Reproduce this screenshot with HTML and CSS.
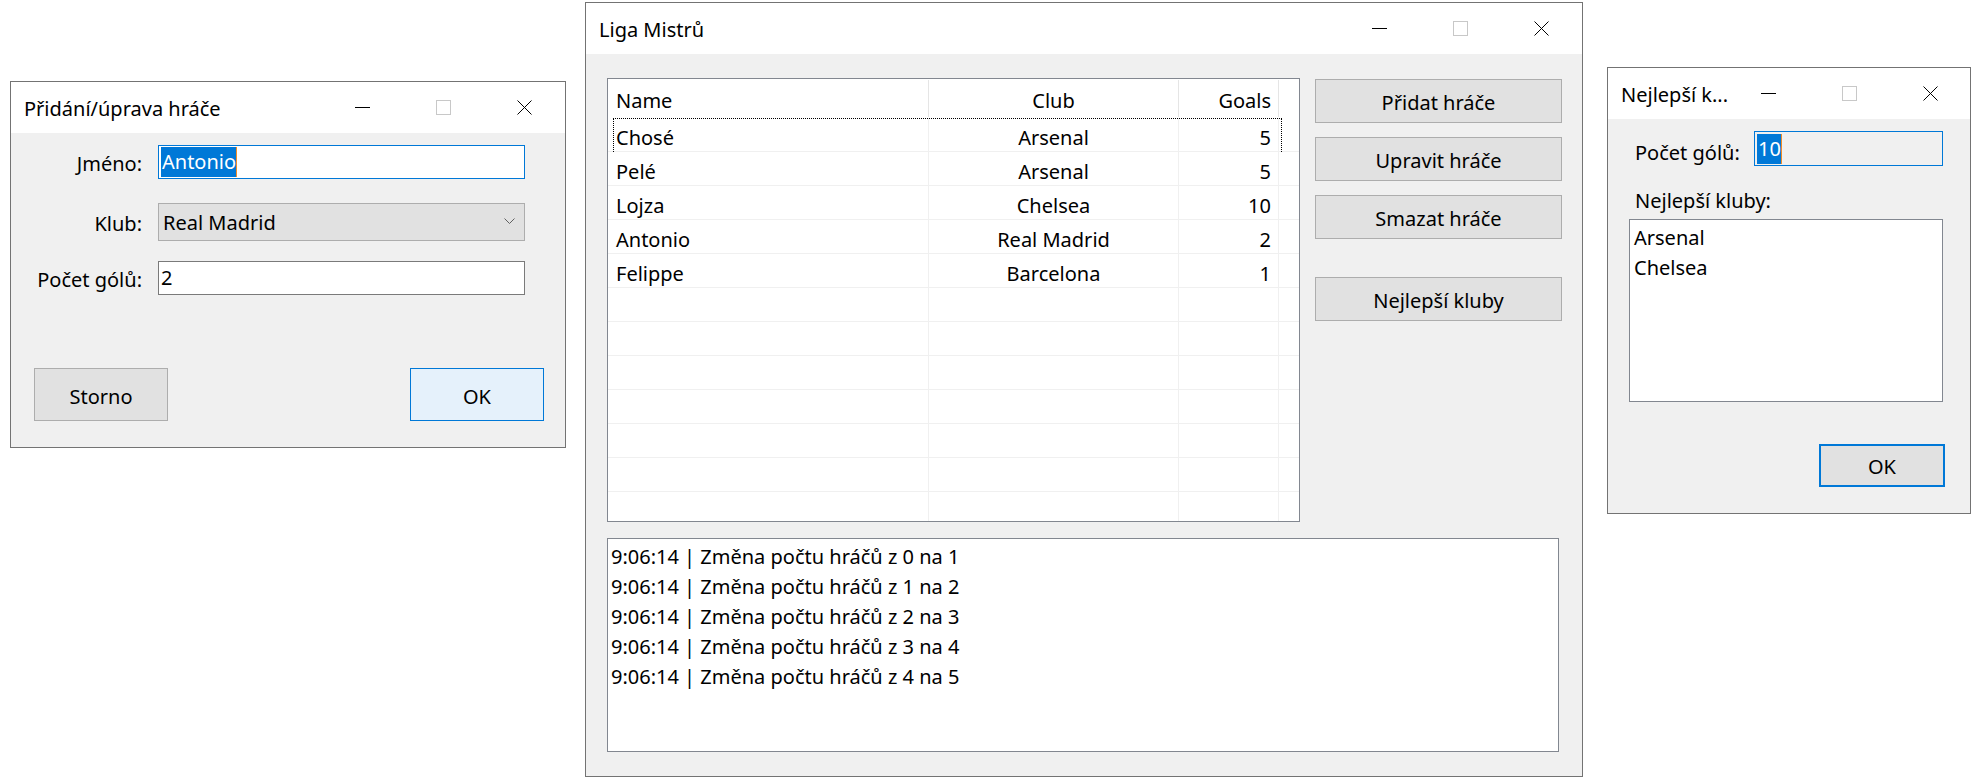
FILE: index.html
```html
<!DOCTYPE html>
<html lang="cs">
<head>
<meta charset="utf-8">
<title>Liga Mistrů</title>
<link rel="stylesheet" href="styles.css">
</head>
<body>
<div class="desktop">

  <section class="win win-edit">
    <header class="titlebar">
      <span class="title">Přidání/úprava hráče</span>
      <div class="controls">
        <span class="ctrl"><svg width="15" height="15" viewBox="0 0 15 15"><line x1="0" y1="7.5" x2="15" y2="7.5" stroke="#000" stroke-width="1"/></svg></span>
        <span class="ctrl"><svg width="15" height="15" viewBox="0 0 15 15"><rect x="0.5" y="0.5" width="14" height="14" fill="none" stroke="#c8c8c8" stroke-width="1"/></svg></span>
        <span class="ctrl"><svg width="15" height="15" viewBox="0 0 15 15"><path d="M0.5 0.5 L14.5 14.5 M14.5 0.5 L0.5 14.5" stroke="#000" stroke-width="1" fill="none"/></svg></span>
      </div>
    </header>
    <div class="winbody edit-body">
      <div class="form-row r1">
        <span class="label">Jméno:</span>
        <div class="textbox focused"><span class="sel">Antonio</span><span class="caret"></span></div>
      </div>
      <div class="form-row r2">
        <span class="label">Klub:</span>
        <div class="combo"><span>Real Madrid</span><svg class="chev" width="11" height="7" viewBox="0 0 11 7"><polyline points="0.5,0.5 5.5,5.5 10.5,0.5" fill="none" stroke="#606060" stroke-width="1"/></svg></div>
      </div>
      <div class="form-row r3">
        <span class="label">Počet gólů:</span>
        <div class="textbox">2</div>
      </div>
      <div class="actions">
        <button class="btn btn-cancel">Storno</button>
        <button class="btn btn-default-hover">OK</button>
      </div>
    </div>
  </section>

  <section class="win win-main">
    <header class="titlebar">
      <span class="title">Liga Mistrů</span>
      <div class="controls">
        <span class="ctrl"><svg width="15" height="15" viewBox="0 0 15 15"><line x1="0" y1="7.5" x2="15" y2="7.5" stroke="#000" stroke-width="1"/></svg></span>
        <span class="ctrl"><svg width="15" height="15" viewBox="0 0 15 15"><rect x="0.5" y="0.5" width="14" height="14" fill="none" stroke="#c8c8c8" stroke-width="1"/></svg></span>
        <span class="ctrl"><svg width="15" height="15" viewBox="0 0 15 15"><path d="M0.5 0.5 L14.5 14.5 M14.5 0.5 L0.5 14.5" stroke="#000" stroke-width="1" fill="none"/></svg></span>
      </div>
    </header>
    <div class="winbody main-body">
      <div class="listview">
        <div class="lv-header">
          <div class="hc c-name">Name</div>
          <div class="hc c-club">Club</div>
          <div class="hc c-goals">Goals</div>
          <div class="hc c-fill"></div>
        </div>
        <div class="lv-rows">
          <div class="lv-row focus"><div class="c c-name">Chosé</div><div class="c c-club">Arsenal</div><div class="c c-goals">5</div><div class="c c-fill"></div></div>
          <div class="lv-row"><div class="c c-name">Pelé</div><div class="c c-club">Arsenal</div><div class="c c-goals">5</div><div class="c c-fill"></div></div>
          <div class="lv-row"><div class="c c-name">Lojza</div><div class="c c-club">Chelsea</div><div class="c c-goals">10</div><div class="c c-fill"></div></div>
          <div class="lv-row"><div class="c c-name">Antonio</div><div class="c c-club">Real Madrid</div><div class="c c-goals">2</div><div class="c c-fill"></div></div>
          <div class="lv-row"><div class="c c-name">Felippe</div><div class="c c-club">Barcelona</div><div class="c c-goals">1</div><div class="c c-fill"></div></div>
          <div class="lv-row"><div class="c c-name"></div><div class="c c-club"></div><div class="c c-goals"></div><div class="c c-fill"></div></div>
          <div class="lv-row"><div class="c c-name"></div><div class="c c-club"></div><div class="c c-goals"></div><div class="c c-fill"></div></div>
          <div class="lv-row"><div class="c c-name"></div><div class="c c-club"></div><div class="c c-goals"></div><div class="c c-fill"></div></div>
          <div class="lv-row"><div class="c c-name"></div><div class="c c-club"></div><div class="c c-goals"></div><div class="c c-fill"></div></div>
          <div class="lv-row"><div class="c c-name"></div><div class="c c-club"></div><div class="c c-goals"></div><div class="c c-fill"></div></div>
          <div class="lv-row"><div class="c c-name"></div><div class="c c-club"></div><div class="c c-goals"></div><div class="c c-fill"></div></div>
          <div class="lv-row"><div class="c c-name"></div><div class="c c-club"></div><div class="c c-goals"></div><div class="c c-fill"></div></div>
        </div>
      </div>
      <div class="side-buttons">
        <button class="btn side-btn">Přidat hráče</button>
        <button class="btn side-btn">Upravit hráče</button>
        <button class="btn side-btn">Smazat hráče</button>
        <button class="btn side-btn gap-before">Nejlepší kluby</button>
      </div>
      <div class="log">
        <div>9:06:14 | Změna počtu hráčů z 0 na 1</div>
        <div>9:06:14 | Změna počtu hráčů z 1 na 2</div>
        <div>9:06:14 | Změna počtu hráčů z 2 na 3</div>
        <div>9:06:14 | Změna počtu hráčů z 3 na 4</div>
        <div>9:06:14 | Změna počtu hráčů z 4 na 5</div>
      </div>
    </div>
  </section>

  <section class="win win-best">
    <header class="titlebar">
      <span class="title">Nejlepší k...</span>
      <div class="controls">
        <span class="ctrl"><svg width="15" height="15" viewBox="0 0 15 15"><line x1="0" y1="7.5" x2="15" y2="7.5" stroke="#000" stroke-width="1"/></svg></span>
        <span class="ctrl"><svg width="15" height="15" viewBox="0 0 15 15"><rect x="0.5" y="0.5" width="14" height="14" fill="none" stroke="#c8c8c8" stroke-width="1"/></svg></span>
        <span class="ctrl"><svg width="15" height="15" viewBox="0 0 15 15"><path d="M0.5 0.5 L14.5 14.5 M14.5 0.5 L0.5 14.5" stroke="#000" stroke-width="1" fill="none"/></svg></span>
      </div>
    </header>
    <div class="winbody best-body">
      <div class="best-row">
        <span class="label-left">Počet gólů:</span>
        <div class="textbox readonly focused"><span class="sel">10</span><span class="caret"></span></div>
      </div>
      <div class="best-caption">Nejlepší kluby:</div>
      <div class="listbox">
        <div>Arsenal</div>
        <div>Chelsea</div>
      </div>
      <div class="best-actions">
        <button class="btn btn-default">OK</button>
      </div>
    </div>
  </section>

</div>
</body>
</html>
```

FILE: styles.css
```css
* { box-sizing: border-box; }

html, body {
  margin: 0;
  padding: 0;
  background: #ffffff;
}

body {
  font-family: "Noto Sans", "Open Sans", sans-serif;
  font-size: 20px;
  color: #000;
}

.desktop {
  position: relative;
  width: 1982px;
  height: 782px;
  overflow: hidden;
  background: #ffffff;
}

/* ---------- windows ---------- */
.win {
  position: absolute;
  display: flex;
  flex-direction: column;
  border: 1px solid #737373;
  background: #f0f0f0;
}

.win-edit { left: 10px; top: 81px; width: 556px; height: 367px; }
.win-main { left: 585px; top: 2px; width: 998px; height: 775px; }
.win-best { left: 1607px; top: 67px; width: 364px; height: 447px; }

.titlebar {
  height: 51px;
  flex: 0 0 51px;
  background: #ffffff;
  display: flex;
  align-items: center;
  justify-content: space-between;
}

.title {
  padding-left: 13px;
  padding-top: 2px;
  white-space: nowrap;
  line-height: 1;
}

.controls {
  display: flex;
  height: 100%;
}

.ctrl {
  width: 81px;
  height: 100%;
  display: flex;
  align-items: center;
  justify-content: center;
}

.ctrl svg { display: block; }

.winbody {
  flex: 1;
  background: #f0f0f0;
}

/* ---------- common controls ---------- */
.textbox {
  height: 34px;
  background: #ffffff;
  border: 1px solid #7a7a7a;
  padding: 0 2px;
  display: flex;
  align-items: center;
  line-height: 30px;
  white-space: nowrap;
}

.textbox.focused { border-color: #0078d7; }

.textbox .sel {
  background: #0078d7;
  color: #ffffff;
  height: 30px;
  line-height: 30px;
  padding-left: 1px;
}

.textbox .caret {
  width: 1px;
  height: 30px;
  background: #f08c28;
}

.btn {
  font-family: inherit;
  font-size: 20px;
  color: #000;
  background: #e1e1e1;
  border: 1px solid #adadad;
  padding: 2px 0 0;
  margin: 0;
  display: flex;
  align-items: center;
  justify-content: center;
}

.btn-default-hover {
  background: #e5f1fb;
  border-color: #0078d7;
}

.btn-default {
  border: 2px solid #0078d7;
}

/* ---------- edit dialog ---------- */
.edit-body {
  display: flex;
  flex-direction: column;
  padding-top: 12px;
}

.form-row {
  display: flex;
  align-items: center;
  gap: 16px;
}

.form-row .label {
  width: 131px;
  text-align: right;
  white-space: nowrap;
  padding-top: 3px;
}

.form-row .textbox,
.form-row .combo {
  width: 367px;
}

.r2 { margin-top: 24px; }
.r3 { margin-top: 20px; }

.combo {
  height: 38px;
  background: #e1e1e1;
  border: 1px solid #adadad;
  display: flex;
  align-items: center;
  justify-content: space-between;
  padding: 1px 9px 0 4px;
}

.combo .chev { margin-top: -2px; }

.actions {
  margin-top: 73px;
  display: flex;
  justify-content: space-between;
  padding: 0 21px 0 23px;
}

.actions .btn {
  width: 134px;
  height: 53px;
  padding-top: 3px;
}

/* ---------- main window ---------- */
.main-body {
  display: grid;
  grid-template-columns: 693px 247px;
  grid-template-rows: 444px 214px;
  column-gap: 15px;
  row-gap: 16px;
  padding: 24px 20px 0 21px;
  align-content: start;
}

.listview {
  background: #ffffff;
  border: 1px solid #828790;
  overflow: hidden;
  display: flex;
  flex-direction: column;
}

.lv-header,
.lv-row {
  display: grid;
  grid-template-columns: 321px 250px 100px 1fr;
}

.lv-header {
  height: 39px;
  flex: 0 0 39px;
  align-items: stretch;
}

.hc {
  display: flex;
  align-items: center;
  border-right: 1px solid #e5e5e5;
  margin: 1px 0 1px;
  padding-top: 4px;
  white-space: nowrap;
}

.hc.c-fill { border-right: none; }

.lv-rows { flex: 1; overflow: hidden; }

.lv-row {
  position: relative;
  height: 34px;
  border-bottom: 1px solid #f0f0f0;
}

.c {
  display: flex;
  align-items: center;
  border-right: 1px solid #f0f0f0;
  padding-top: 5px;
  white-space: nowrap;
}

.c.c-fill { border-right: none; }

.c-name { padding-left: 8px; justify-content: flex-start; }
.c-club { justify-content: center; }
.c-goals { justify-content: flex-end; padding-right: 7px; }

.lv-row.focus::after {
  content: "";
  position: absolute;
  left: 5px;
  top: 0;
  width: 667px;
  height: 33px;
  border-top: 1px dotted #000;
  border-left: 1px dotted #000;
  border-right: 1px dotted #000;
  pointer-events: none;
}

.side-buttons {
  display: flex;
  flex-direction: column;
  gap: 14px;
  padding-top: 1px;
}

.side-btn {
  width: 247px;
  height: 44px;
}

.side-btn.gap-before { margin-top: 24px; }

.log {
  grid-column: 1 / -1;
  width: 952px;
  background: #ffffff;
  border: 1px solid #828790;
  padding: 3px 3px 1px;
  line-height: 30px;
  white-space: nowrap;
}

/* ---------- best clubs dialog ---------- */
.best-body {
  display: flex;
  flex-direction: column;
  padding: 12px 25px 0 21px;
}

.best-row {
  display: flex;
  align-items: center;
}

.label-left {
  width: 125px;
  padding-left: 6px;
  padding-top: 7px;
  white-space: nowrap;
}

.best-row .textbox {
  width: 189px;
  height: 35px;
}

.textbox.readonly { background: #f0f0f0; }

.best-caption {
  margin-top: 20px;
  padding-left: 6px;
  line-height: 30px;
}

.listbox {
  margin-top: 3px;
  width: 314px;
  height: 183px;
  background: #ffffff;
  border: 1px solid #828790;
  padding: 3px 4px;
  line-height: 30px;
}

.best-actions {
  margin-top: 42px;
  display: flex;
  justify-content: flex-end;
}

.best-actions .btn {
  width: 126px;
  height: 43px;
}
```
